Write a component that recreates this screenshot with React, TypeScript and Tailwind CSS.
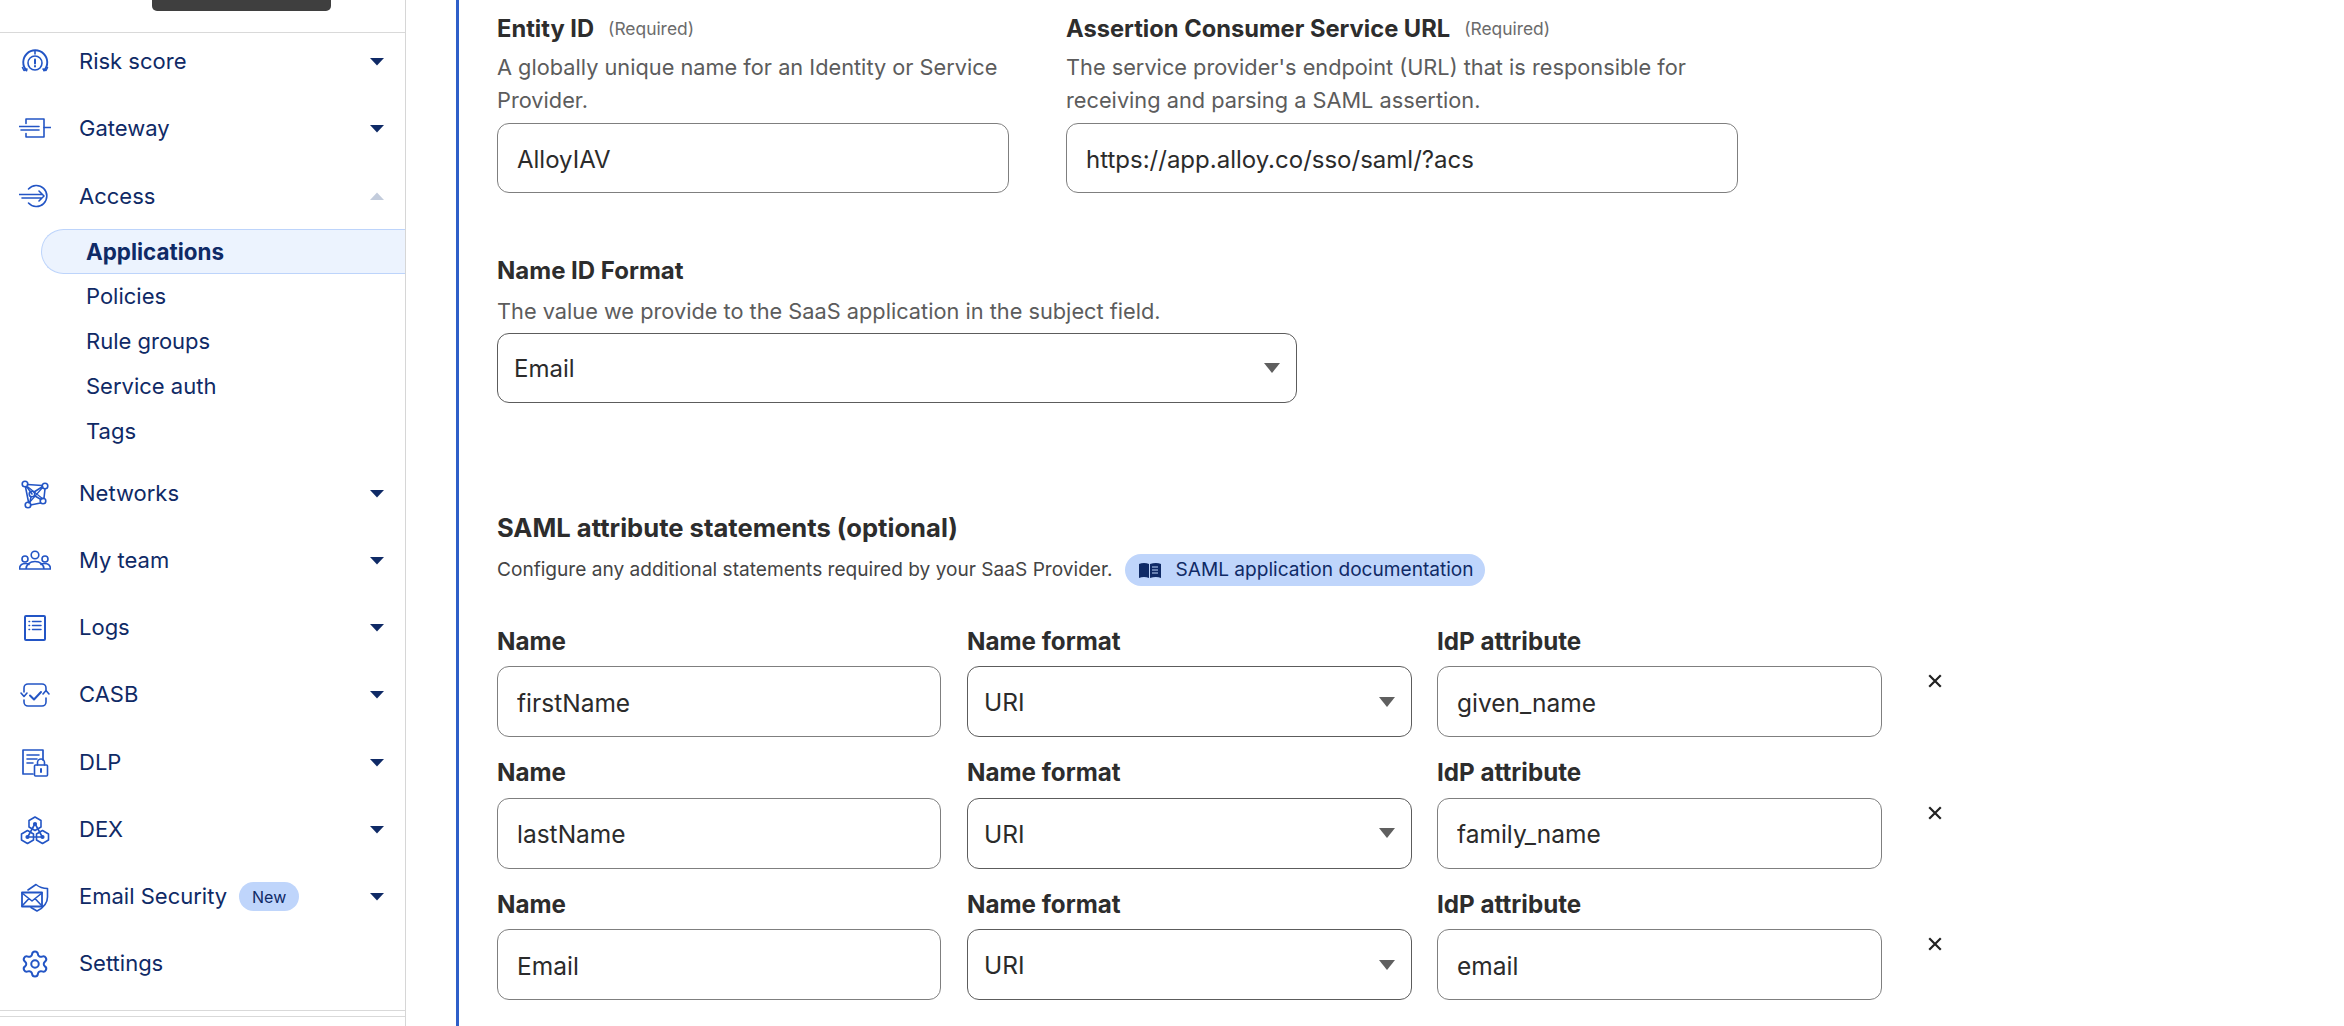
import React from "react";
import { Settings } from "lucide-react";

const Caret = ({ up }: { up?: boolean }) => (
  <svg width="14" height="9" viewBox="0 0 14 9" className={up ? "rotate-180 fill-[#c3ccdc]" : "fill-[#0f2a66]"}>
    <path d="M0 1h14L7 8.5z" />
  </svg>
);

const Icon = ({ children }: { children: React.ReactNode }) => (
  <svg
    width="32"
    height="32"
    viewBox="0 0 32 32"
    fill="none"
    stroke="#2355c5"
    strokeWidth="1.6"
    strokeLinecap="round"
    strokeLinejoin="round"
    className="shrink-0"
  >
    {children}
  </svg>
);

const RiskIcon = () => (
  <Icon>
    <path d="M7.5 25.5a12 12 0 1 1 17.5 0" strokeWidth="1.9" />
    <path d="M3.5 22.5l1.5 3 3-1.5M28.5 22.5l-1.5 3-3-1.5M16 6v3" />
    <circle cx="16" cy="18" r="7" />
    <path d="M16 14.5v4" strokeWidth="2" />
    <path d="M16 21v.4" strokeWidth="2" />
  </Icon>
);
const GatewayIcon = () => (
  <Icon>
    <path d="M7 11.5V7h18v18H7v-3.5" />
    <path d="M0.5 14.5H20M2 18H20M25 15.5h6.5" />
  </Icon>
);
const AccessIcon = () => (
  <Icon>
    <path d="M9.5 9a10.5 10.5 0 1 1 0 14" />
    <path d="M0.5 14.5H23M3 18H23M20 11l5 5-5 5" />
  </Icon>
);
const NetworksIcon = () => (
  <Icon>
    <path d="M8.5 7.5L23 8.5M6.5 10l3 15M26 12l-1 9M21.5 26l-10 2M13 17L8 10M15 15l8-5M16 19l6 3.5M12 20l-1 5" />
    <path d="M9 10l15 12M24 10L10 26" strokeWidth="1.2" />
    <circle cx="6" cy="7" r="2.8" />
    <circle cx="26" cy="9" r="2.8" />
    <circle cx="9" cy="28" r="2.8" />
    <circle cx="24" cy="24" r="2.8" />
    <circle cx="13" cy="17" r="2.8" />
  </Icon>
);
const TeamIcon = () => (
  <Icon>
    <circle cx="16" cy="11" r="3.8" />
    <circle cx="6" cy="15" r="3" />
    <circle cx="26" cy="15" r="3" />
    <path d="M0.5 25h31M0.5 25c0-3.500 2.500-5.500 6-5.500 1.500 0 2.500.3 3.500 1M31.500 25c0-3.500-2.500-5.500-6-5.500-1.500 0-2.500.3-3.500 1M7 25c0-4.500 4-7.500 9-7.500s9 3 9 7.500" />
  </Icon>
);
const LogsIcon = () => (
  <Icon>
    <rect x="6" y="4" width="20" height="24" rx="1" strokeWidth="2" />
    <path d="M10 9.500h.6M10 13.500h.6M10 17.500h.6M13.500 9.500H22M13.500 13.500H22M13.500 17.500H22" strokeWidth="1.5" />
  </Icon>
);
const CasbIcon = () => (
  <Icon>
    <path d="M5 13V9a4 4 0 0 1 4-4h14a4 4 0 0 1 4 4v2M27 19v4a4 4 0 0 1-4 4H9a4 4 0 0 1-4-4v-2" />
    <path d="M2 14l3 3.500L8 14M24 15l3-3.500 3 3.500" />
    <path d="M11 16.500l4 4 7-7.500" strokeWidth="2" />
  </Icon>
);
const DlpIcon = () => (
  <Icon>
    <path d="M14 28H4V4h20v10" strokeWidth="1.7" />
    <path d="M8 9h12M8 13h10M8 17h6" strokeWidth="1.6" />
    <rect x="15.500" y="19" width="13" height="11" rx="1" />
    <path d="M18.500 19v-2.500a3.500 3.500 0 0 1 7 0V19" />
    <path d="M22 23v3" strokeWidth="2" />
  </Icon>
);
const DexIcon = () => (
  <Icon>
    <path d="M16 4l6 3.500v6.500l-6 3.500-6-3.500V7.500z" />
    <path d="M8.500 17.500l6 3.500v6l-6 3.500-6-3.500v-6z" />
    <path d="M23.500 17.500l6 3.500v6l-6 3.500-6-3.500v-6z" />
    <circle cx="16" cy="11" r="1.300" fill="#2355c5" />
    <circle cx="8.500" cy="24" r="1.300" fill="#2355c5" />
    <circle cx="23.500" cy="24" r="1.300" fill="#2355c5" />
    <path d="M15 12.500l-5.500 10M17 12.500l5.500 10M10 24h12" />
  </Icon>
);
const EmailIcon = () => (
  <Icon>
    <path d="M9 9l8-5.500c3 2.500 7 4 11.500 4V16c0 7-4.500 11-10.500 14l-6-3.500" />
    <rect x="3" y="11.500" width="20" height="14" strokeWidth="1.800" />
    <path d="M3 12l10 8 10-8M3 25l7-7.500M23 25l-7-7.500" />
  </Icon>
);

const navTop = [
  { label: "Risk score", icon: <RiskIcon /> },
  { label: "Gateway", icon: <GatewayIcon /> },
];
const navBottom = [
  { label: "Networks", icon: <NetworksIcon /> },
  { label: "My team", icon: <TeamIcon /> },
  { label: "Logs", icon: <LogsIcon /> },
  { label: "CASB", icon: <CasbIcon /> },
  { label: "DLP", icon: <DlpIcon /> },
  { label: "DEX", icon: <DexIcon /> },
];

const NavRow = ({ label, icon, children, up }: { label: string; icon: React.ReactNode; children?: React.ReactNode; up?: boolean }) => (
  <div className="flex h-[45px] items-center pl-[19px] pr-[21px] mb-[22.25px]">
    {icon}
    <span className="ml-[28px] text-[22px] text-[#0f2a66]">{label}</span>
    {children}
    <span className="ml-auto flex">
      <Caret up={up} />
    </span>
  </div>
);

const subItems = ["Policies", "Rule groups", "Service auth", "Tags"];

const Sidebar = () => (
  <aside className="w-[406px] shrink-0 h-full border-r border-[#d6d6d6] flex flex-col">
    <div className="ml-[152px] h-[11px] w-[179px] rounded-b-[5px] bg-[#3f3f3f]" />
    <div className="mt-[21px] h-px bg-[#d9d9d9]" />
    <nav className="pt-[5.5px]">
      {navTop.map((n) => (
        <NavRow key={n.label} {...n} />
      ))}
      <div className="flex h-[45px] items-center pl-[19px] pr-[21px] pt-[1px]">
        <AccessIcon />
        <span className="ml-[28px] text-[22px] text-[#0f2a66]">Access</span>
        <span className="ml-auto flex">
          <Caret up />
        </span>
      </div>
      <div className="mt-[11px] pl-[41px] mb-[16.5px]">
        <div className="h-[45px] flex items-center rounded-l-full border border-r-0 border-[#bdd4fb] bg-[#ecf3fe] pl-[44px] text-[22.4px] font-bold text-[#0f2a66]">
          Applications
        </div>
        {subItems.map((s) => (
          <div key={s} className="h-[45px] flex items-center pl-[45px] text-[22px] text-[#0f2a66]">
            {s}
          </div>
        ))}
      </div>
      {navBottom.map((n) => (
        <NavRow key={n.label} {...n} />
      ))}
      <NavRow label="Email Security" icon={<EmailIcon />}>
        <span className="ml-[12px] h-[29px] w-[60px] flex items-center justify-center rounded-full bg-[#bfd5fb] text-[16px] text-[#0f2a66]">
          New
        </span>
      </NavRow>
      <div className="flex h-[45px] items-center pl-[19px]">
        <span className="flex w-[32px] justify-center">
          <Settings size={30} strokeWidth={1.6} color="#2355c5" />
        </span>
        <span className="ml-[28px] text-[22px] text-[#0f2a66]">Settings</span>
      </div>
    </nav>
    <div className="mt-[24px] h-px bg-[#d9d9d9]" />
    <div className="mt-[5px] h-px bg-[#d9d9d9]" />
  </aside>
);

const Label = ({ children, required, className }: { children: string; required?: boolean; className?: string }) => (
  <div className={`flex h-[36px] items-center font-bold text-[#2d2d2d] ${className ?? "text-[23.7px]"}`}>
    {children}
    {required && <span className="ml-[14px] text-[17.4px] font-normal text-[#6b6b6b]">(Required)</span>}
  </div>
);

const TextInput = ({ value, className }: { value: string; className?: string }) => (
  <input
    readOnly
    value={value}
    className={`block rounded-[12px] border border-[#7f7f7f] bg-white px-[19px] pt-[2px] text-[#2b2b2b] outline-none ${className ?? ""}`}
  />
);

const SelectBox = ({ value, className }: { value: string; className?: string }) => (
  <div className={`flex items-center justify-between rounded-[12px] border border-[#5c5c5c] bg-white pl-[16px] pr-[16px] text-[#2b2b2b] ${className ?? ""}`}>
    <span className="pt-[2px]">{value}</span>
    <svg width="16" height="10" viewBox="0 0 16 10" className="fill-[#5f5f5f]">
      <path d="M0 0h16L8 10z" />
    </svg>
  </div>
);

const rows = [
  ["firstName", "given_name"],
  ["lastName", "family_name"],
  ["Email", "email"],
];

const App = () => (
  <div className="flex h-screen w-full overflow-hidden bg-white font-[Inter,sans-serif]">
    <Sidebar />
    <main className="ml-[50px] h-full flex-1 border-l-[3px] border-[#2f5fc9] pl-[38px] pt-[11px]">
      <div className="flex gap-[57px]">
        <div className="w-[512px]">
          <Label required>Entity ID</Label>
          <p className="mt-[3.5px] text-[21.75px] leading-[33px] text-[#5c5c5c]">
            A globally unique name for an Identity or Service Provider.
          </p>
          <TextInput value="AlloyIAV" className="mt-[6.5px] h-[70px] w-full text-[24px]" />
        </div>
        <div className="w-[672px]">
          <Label required>Assertion Consumer Service URL</Label>
          <p className="mt-[3.5px] text-[21.75px] leading-[33px] text-[#5c5c5c]">
            The service provider's endpoint (URL) that is responsible for receiving and parsing a SAML assertion.
          </p>
          <TextInput value="https://app.alloy.co/sso/saml/?acs" className="mt-[6.5px] h-[70px] w-full text-[24px]" />
        </div>
      </div>

      <div className="mt-[60px]">
        <Label className="text-[24px]">Name ID Format</Label>
        <p className="mt-[5.5px] text-[21.75px] leading-[33px] text-[#5c5c5c]">
          The value we provide to the SaaS application in the subject field.
        </p>
        <SelectBox value="Email" className="mt-[5.5px] h-[70px] w-[800px] text-[24px]" />
      </div>

      <div className="mt-[107.5px]">
        <Label className="text-[25.6px]">SAML attribute statements (optional)</Label>
        <div className="mt-[7px] flex h-[32px] items-center text-[19.1px] text-[#444]">
          Configure any additional statements required by your SaaS Provider.
          <span className="ml-[13px] flex h-[32px] w-[360px] items-center rounded-full bg-[#bfd5fb] pl-[14px] text-[#0f2a66]">
            <svg width="22" height="16" viewBox="0 0 22 16" className="mr-[14px] shrink-0">
              <path d="M0 2c3-1.500 7-1.500 10 0v14c-3-1.500-7-1.500-10 0zM22 2c-3-1.500-7-1.500-11 0v14c4-1.500 8-1.500 11 0z" fill="#0f2a66" />
              <path d="M13 5h6M13 8h6M13 11h6" stroke="#bfd5fb" strokeWidth="1" />
            </svg>
            SAML application documentation
          </span>
        </div>
      </div>

      <div className="mt-[38.5px] flex flex-col gap-[18.5px]">
        {rows.map(([name, attr]) => (
          <div key={name} className="flex">
            <div className="w-[444px]">
              <Label className="text-[24.2px]">Name</Label>
              <TextInput value={name} className="mt-[6px] h-[71px] w-full text-[24.5px]" />
            </div>
            <div className="ml-[26px] w-[445px]">
              <Label className="text-[24.2px]">Name format</Label>
              <SelectBox value="URI" className="mt-[6px] h-[71px] text-[24.5px]" />
            </div>
            <div className="ml-[25px] w-[445px]">
              <Label className="text-[24.2px]">IdP attribute</Label>
              <TextInput value={attr} className="mt-[6px] h-[71px] w-full text-[24.5px]" />
            </div>
            <div className="ml-[46px] mt-[50px]">
              <svg width="14" height="14" viewBox="0 0 14 14" stroke="#222" strokeWidth="2.200" strokeLinecap="square">
                <path d="M2 2l10 10M12 2L2 12" />
              </svg>
            </div>
          </div>
        ))}
      </div>
    </main>
  </div>
);

export default App;
